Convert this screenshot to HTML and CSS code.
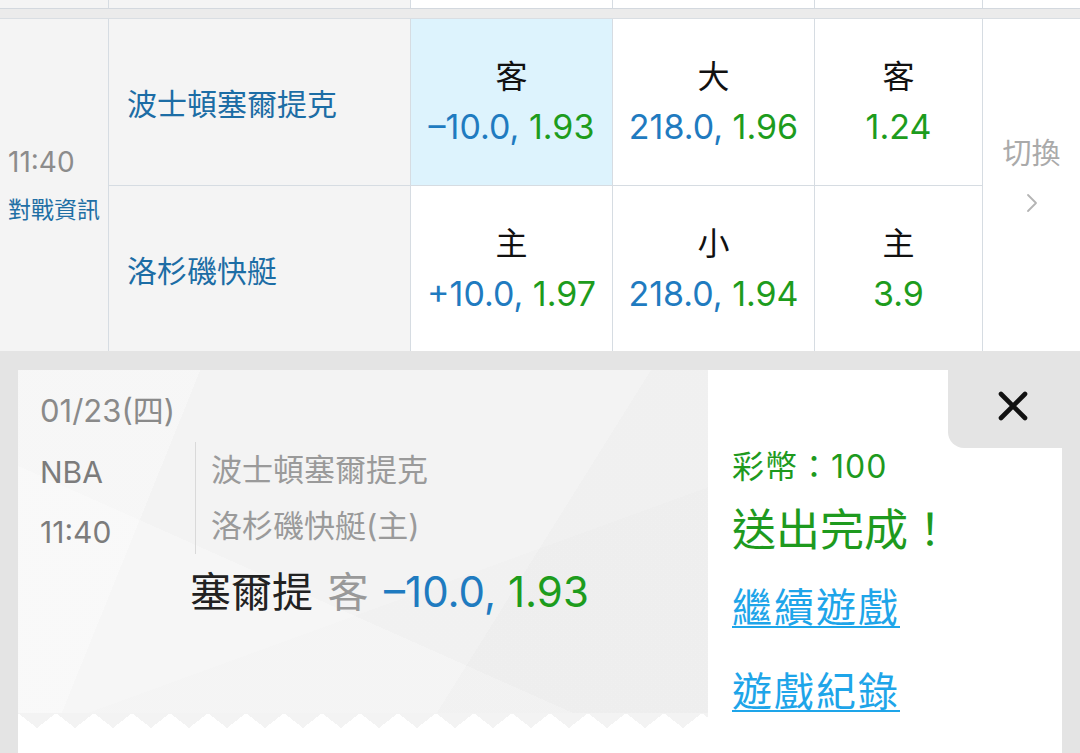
FILE: index.html
```html
<!DOCTYPE html>
<html lang="zh-Hant">
<head>
  <meta charset="UTF-8" />
  <meta name="viewport" content="width=device-width, initial-scale=1.0" />
  <title>投注完成</title>
  <link rel="stylesheet" href="styles.css">
</head>
<body>
  <div class="board">
    <div class="prev-row">
      <div class="cell shade"></div>
      <div class="cell shade"></div>
      <div class="cell"></div>
      <div class="cell"></div>
      <div class="cell"></div>
      <div class="cell"></div>
    </div>
    <div class="divider"></div>
    <div class="match">
      <div class="time-cell">
        <div class="time">11:40</div>
        <div class="info">對戰資訊</div>
      </div>
      <div class="team">波士頓塞爾提克</div>
      <div class="odd picked">
        <div class="side">客</div>
        <div class="line"><span class="num">–10.0,</span> <span class="price">1.93</span></div>
      </div>
      <div class="odd">
        <div class="side">大</div>
        <div class="line"><span class="num">218.0,</span> <span class="price">1.96</span></div>
      </div>
      <div class="odd">
        <div class="side">客</div>
        <div class="line"><span class="price">1.24</span></div>
      </div>
      <div class="switch">
        <div>切換</div>
        <svg class="chevron" width="12" height="20" viewBox="0 0 12 20">
          <polyline points="2,2 10,10 2,18" fill="none" stroke="#b4b4b4" stroke-width="1.8" stroke-linecap="round" stroke-linejoin="round" />
        </svg>
      </div>
      <div class="team">洛杉磯快艇</div>
      <div class="odd">
        <div class="side">主</div>
        <div class="line"><span class="num">+10.0,</span> <span class="price">1.97</span></div>
      </div>
      <div class="odd">
        <div class="side">小</div>
        <div class="line"><span class="num">218.0,</span> <span class="price">1.94</span></div>
      </div>
      <div class="odd">
        <div class="side">主</div>
        <div class="line"><span class="price">3.9</span></div>
      </div>
    </div>
  </div>

  <div class="sheet">
    <div class="card">
      <div class="ticket">
        <div class="ticket-body">
          <div class="date">01/23(四)</div>
          <div class="game">
            <div class="meta">
              <div>NBA</div>
              <div>11:40</div>
            </div>
            <div class="teams">
              <div>波士頓塞爾提克</div>
              <div>洛杉磯快艇(主)</div>
            </div>
          </div>
          <div class="bet">
            <span class="pick">塞爾提</span>
            <span class="pick-side">客</span>
            <span class="odds"><span class="num">–10.0,</span> <span class="price">1.93</span></span>
          </div>
        </div>
        <div class="ticket-edge"></div>
      </div>
      <div class="result">
        <div class="result-head">
          <div class="close">
            <svg width="30" height="30" viewBox="0 0 30 30">
              <path d="M3 3 L27 27 M27 3 L3 27" stroke="#111" stroke-width="4.6" stroke-linecap="round" />
            </svg>
          </div>
        </div>
        <div class="result-body">
          <div class="coins">彩幣：100</div>
          <div class="done">送出完成！</div>
          <a class="link" href="#">繼續遊戲</a>
          <a class="link" href="#">遊戲紀錄</a>
        </div>
      </div>
    </div>
  </div>
</body>
</html>
```

FILE: styles.css
```css
body {
  margin: 0;
  font-family: Inter, "Noto Sans CJK TC", sans-serif;
  background: #e4e4e4;
  overflow: hidden;
}

.board {
  background: #fff;
}

.prev-row,
.match {
  display: grid;
  grid-template-columns: 108px 301px 201px 201px 167px 97px;
  column-gap: 1px;
  background: #d6dce2;
}

.prev-row {
  height: 8px;
}

.cell {
  background: #fff;
}

.cell.shade {
  background: #f4f4f4;
}

.divider {
  height: 9px;
  background: #ebebeb;
  border-top: 1px solid #d3d8de;
  border-bottom: 1px solid #d9dee3;
}

.match {
  grid-template-rows: 166px 165px;
  row-gap: 1px;
}

.time-cell {
  grid-row: span 2;
  background: #f4f4f4;
  display: flex;
  flex-direction: column;
  justify-content: center;
  padding-left: 8px;
}

.time {
  font-size: 28px;
  line-height: 36px;
  color: #8c8c8c;
}

.info {
  font-size: 23px;
  line-height: 32px;
  margin-top: 14px;
  color: #1f6fa5;
}

.team {
  background: #f4f4f4;
  display: flex;
  align-items: center;
  padding-left: 18px;
  font-size: 30px;
  color: #1c6da5;
}

.odd {
  background: #fff;
  display: flex;
  flex-direction: column;
  align-items: center;
  justify-content: center;
}

.odd.picked {
  background: #ddf3fd;
}

.side {
  font-size: 32px;
  line-height: 50px;
  color: #111;
}

.line {
  font-size: 34px;
  line-height: 50px;
}

.num {
  color: #1f7bc0;
}

.price {
  color: #1d9c1d;
}

.switch {
  grid-row: span 2;
  background: #fff;
  display: flex;
  flex-direction: column;
  align-items: center;
  justify-content: center;
  padding-bottom: 23px;
  font-size: 29px;
  line-height: 40px;
  color: #aaa;
}

.chevron {
  margin-top: 19px;
}

/* bottom sheet */

.sheet {
  height: 402px;
  padding: 19px 18px 0;
  box-sizing: border-box;
}

.card {
  display: flex;
  height: 100%;
  background: #fff;
}

.ticket {
  width: 690px;
  display: flex;
  flex-direction: column;
  padding-bottom: 25px;
}

.ticket-body {
  flex: 1;
  padding: 21px 0 0 22px;
  background:
    linear-gradient(112deg, rgba(255, 255, 255, 0.3) 0 22%, transparent 22%),
    linear-gradient(-58deg, rgba(0, 0, 0, 0.01) 0 30%, transparent 30%),
    linear-gradient(24deg, rgba(255, 255, 255, 0.25) 0 38%, transparent 38%),
    linear-gradient(160deg, transparent 62%, rgba(0, 0, 0, 0.008) 62%),
    #f3f3f3;
}

.ticket-edge {
  height: 15px;
  background:
    conic-gradient(from -52deg at 50% 100%, #f3f3f3 104deg, transparent 0)
    0 0 / 38px 15px repeat-x;
}

.date {
  font-size: 31px;
  line-height: 40px;
  color: #8a8a8a;
}

.game {
  display: flex;
  align-items: flex-start;
  margin-top: 11px;
}

.meta {
  width: 155px;
  font-size: 30px;
  line-height: 60px;
  color: #7c7c7c;
}

.teams {
  border-left: 1px solid #d9d9d9;
  padding-left: 15px;
  font-size: 31px;
  line-height: 56px;
  color: #9a9a9a;
}

.bet {
  margin: 2px 0 0 150px;
  font-size: 41px;
  line-height: 56px;
}

.bet .pick {
  color: #222;
}

.bet .pick-side {
  color: #999;
  margin: 0 4px 0 3px;
}

.bet .odds {
  font-size: 42px;
}

.result {
  flex: 1;
  display: flex;
  flex-direction: column;
}

.result-head {
  display: flex;
  justify-content: flex-end;
}

.close {
  width: 114px;
  height: 78px;
  box-sizing: border-box;
  padding: 0 0 6px 16px;
  display: flex;
  align-items: center;
  justify-content: center;
  background: #e4e4e4;
  border-bottom-left-radius: 16px;
}

.result-body {
  padding-left: 24px;
  display: flex;
  flex-direction: column;
  align-items: flex-start;
}

.coins {
  font-size: 32px;
  line-height: 38px;
  letter-spacing: 1px;
  color: #1e9a1e;
}

.done {
  margin-top: 14px;
  font-size: 44px;
  line-height: 60px;
  color: #1e9a1e;
}

.link {
  font-size: 40px;
  line-height: 84px;
  letter-spacing: 2px;
  color: #1ea5e9;
  text-decoration-thickness: 2px;
  text-underline-offset: 4px;
}

.done + .link {
  margin-top: 6px;
}
```
